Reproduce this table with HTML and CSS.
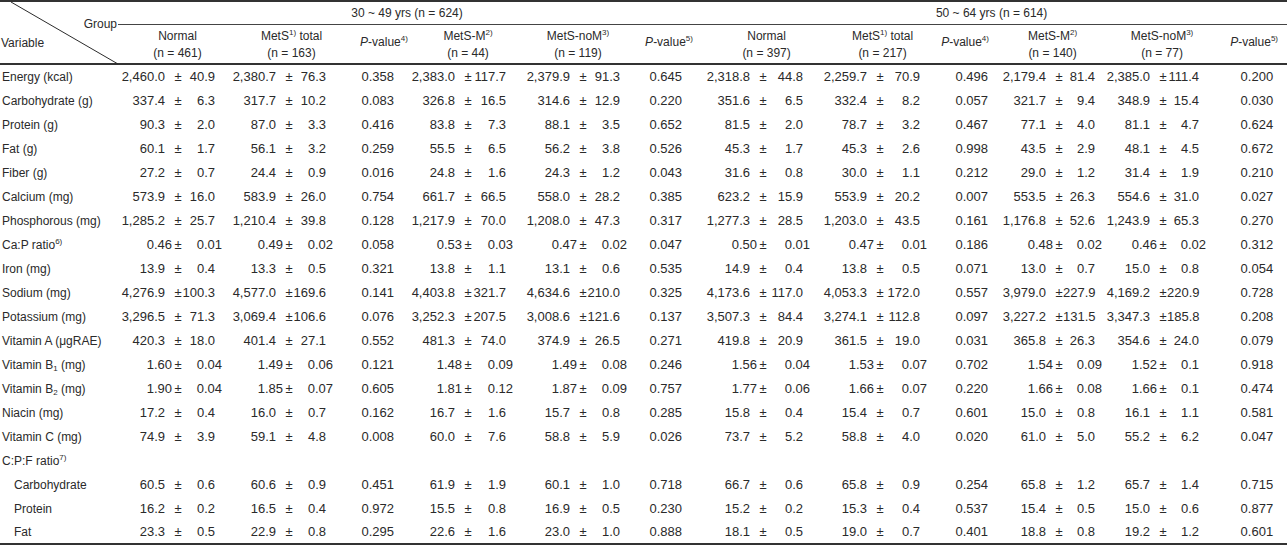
FILE: index.html
```html
<!DOCTYPE html>
<html lang="en">
<head>
<meta charset="utf-8">
<title>Nutrient intake by metabolic syndrome group</title>
<link rel="stylesheet" href="styles.css">
</head>
<body>
<table class="tbl">
  <colgroup>
    <col class="w-var">
    <col class="w56"><col class="w8"><col class="w41">
    <col class="w62"><col class="w8"><col class="w41">
    <col class="w74">
    <col class="w56"><col class="w8"><col class="w42">
    <col class="w65"><col class="w8"><col class="w41">
    <col class="w68">
    <col class="w63"><col class="w8"><col class="w44">
    <col class="w65"><col class="w8"><col class="w44">
    <col class="w74">
    <col class="w53"><col class="w8"><col class="w40">
    <col class="w56"><col class="w8"><col class="w40">
    <col class="w80">
  </colgroup>
  <thead>
    <tr class="grp">
      <th class="corner" rowspan="2">
        <svg class="diag" width="118" height="62" aria-hidden="true"><line x1="11" y1="0" x2="118" y2="62" stroke="#2b2b2b" stroke-width="1"/></svg>
        <span class="lbl-group">Group</span>
        <span class="lbl-var">Variable</span>
      </th>
      <th colspan="14">30 ~ 49 yrs (n = 624)</th>
      <th colspan="14">50 ~ 64 yrs (n = 614)</th>
    </tr>
    <tr class="sub">
      <th colspan="3">Normal<br>(n = 461)</th>
      <th colspan="3" class="sh">MetS<sup>1)</sup> total<br>(n = 163)</th>
      <th class="pv sh"><i>P</i>-value<sup>4)</sup></th>
      <th colspan="3">MetS-M<sup>2)</sup><br>(n = 44)</th>
      <th colspan="3">MetS-noM<sup>3)</sup><br>(n = 119)</th>
      <th class="pv"><i>P</i>-value<sup>5)</sup></th>
      <th colspan="3" class="sh">Normal<br>(n = 397)</th>
      <th colspan="3" class="sh">MetS<sup>1)</sup> total<br>(n = 217)</th>
      <th class="pv ns"><i>P</i>-value<sup>4)</sup></th>
      <th colspan="3" class="ns">MetS-M<sup>2)</sup><br>(n = 140)</th>
      <th colspan="3">MetS-noM<sup>3)</sup><br>(n = 77)</th>
      <th class="pv"><i>P</i>-value<sup>5)</sup></th>
    </tr>
  </thead>
  <tbody>
    <tr><td class="v">Energy (kcal)</td>
      <td class="m">2,460.0</td><td class="pm">±</td><td class="s">40.9</td>
      <td class="m">2,380.7</td><td class="pm">±</td><td class="s">76.3</td>
      <td class="p">0.358</td>
      <td class="m">2,383.0</td><td class="pm">±</td><td class="s">117.7</td>
      <td class="m">2,379.9</td><td class="pm">±</td><td class="s">91.3</td>
      <td class="p">0.645</td>
      <td class="m">2,318.8</td><td class="pm">±</td><td class="s">44.8</td>
      <td class="m">2,259.7</td><td class="pm">±</td><td class="s">70.9</td>
      <td class="p">0.496</td>
      <td class="m">2,179.4</td><td class="pm">±</td><td class="s">81.4</td>
      <td class="m">2,385.0</td><td class="pm">±</td><td class="s">111.4</td>
      <td class="p">0.200</td></tr>
    <tr><td class="v">Carbohydrate (g)</td>
      <td class="m">337.4</td><td class="pm">±</td><td class="s">6.3</td>
      <td class="m">317.7</td><td class="pm">±</td><td class="s">10.2</td>
      <td class="p">0.083</td>
      <td class="m">326.8</td><td class="pm">±</td><td class="s">16.5</td>
      <td class="m">314.6</td><td class="pm">±</td><td class="s">12.9</td>
      <td class="p">0.220</td>
      <td class="m">351.6</td><td class="pm">±</td><td class="s">6.5</td>
      <td class="m">332.4</td><td class="pm">±</td><td class="s">8.2</td>
      <td class="p">0.057</td>
      <td class="m">321.7</td><td class="pm">±</td><td class="s">9.4</td>
      <td class="m">348.9</td><td class="pm">±</td><td class="s">15.4</td>
      <td class="p">0.030</td></tr>
    <tr><td class="v">Protein (g)</td>
      <td class="m">90.3</td><td class="pm">±</td><td class="s">2.0</td>
      <td class="m">87.0</td><td class="pm">±</td><td class="s">3.3</td>
      <td class="p">0.416</td>
      <td class="m">83.8</td><td class="pm">±</td><td class="s">7.3</td>
      <td class="m">88.1</td><td class="pm">±</td><td class="s">3.5</td>
      <td class="p">0.652</td>
      <td class="m">81.5</td><td class="pm">±</td><td class="s">2.0</td>
      <td class="m">78.7</td><td class="pm">±</td><td class="s">3.2</td>
      <td class="p">0.467</td>
      <td class="m">77.1</td><td class="pm">±</td><td class="s">4.0</td>
      <td class="m">81.1</td><td class="pm">±</td><td class="s">4.7</td>
      <td class="p">0.624</td></tr>
    <tr><td class="v">Fat (g)</td>
      <td class="m">60.1</td><td class="pm">±</td><td class="s">1.7</td>
      <td class="m">56.1</td><td class="pm">±</td><td class="s">3.2</td>
      <td class="p">0.259</td>
      <td class="m">55.5</td><td class="pm">±</td><td class="s">6.5</td>
      <td class="m">56.2</td><td class="pm">±</td><td class="s">3.8</td>
      <td class="p">0.526</td>
      <td class="m">45.3</td><td class="pm">±</td><td class="s">1.7</td>
      <td class="m">45.3</td><td class="pm">±</td><td class="s">2.6</td>
      <td class="p">0.998</td>
      <td class="m">43.5</td><td class="pm">±</td><td class="s">2.9</td>
      <td class="m">48.1</td><td class="pm">±</td><td class="s">4.5</td>
      <td class="p">0.672</td></tr>
    <tr><td class="v">Fiber (g)</td>
      <td class="m">27.2</td><td class="pm">±</td><td class="s">0.7</td>
      <td class="m">24.4</td><td class="pm">±</td><td class="s">0.9</td>
      <td class="p">0.016</td>
      <td class="m">24.8</td><td class="pm">±</td><td class="s">1.6</td>
      <td class="m">24.3</td><td class="pm">±</td><td class="s">1.2</td>
      <td class="p">0.043</td>
      <td class="m">31.6</td><td class="pm">±</td><td class="s">0.8</td>
      <td class="m">30.0</td><td class="pm">±</td><td class="s">1.1</td>
      <td class="p">0.212</td>
      <td class="m">29.0</td><td class="pm">±</td><td class="s">1.2</td>
      <td class="m">31.4</td><td class="pm">±</td><td class="s">1.9</td>
      <td class="p">0.210</td></tr>
    <tr><td class="v">Calcium (mg)</td>
      <td class="m">573.9</td><td class="pm">±</td><td class="s">16.0</td>
      <td class="m">583.9</td><td class="pm">±</td><td class="s">26.0</td>
      <td class="p">0.754</td>
      <td class="m">661.7</td><td class="pm">±</td><td class="s">66.5</td>
      <td class="m">558.0</td><td class="pm">±</td><td class="s">28.2</td>
      <td class="p">0.385</td>
      <td class="m">623.2</td><td class="pm">±</td><td class="s">15.9</td>
      <td class="m">553.9</td><td class="pm">±</td><td class="s">20.2</td>
      <td class="p">0.007</td>
      <td class="m">553.5</td><td class="pm">±</td><td class="s">26.3</td>
      <td class="m">554.6</td><td class="pm">±</td><td class="s">31.0</td>
      <td class="p">0.027</td></tr>
    <tr><td class="v">Phosphorous (mg)</td>
      <td class="m">1,285.2</td><td class="pm">±</td><td class="s">25.7</td>
      <td class="m">1,210.4</td><td class="pm">±</td><td class="s">39.8</td>
      <td class="p">0.128</td>
      <td class="m">1,217.9</td><td class="pm">±</td><td class="s">70.0</td>
      <td class="m">1,208.0</td><td class="pm">±</td><td class="s">47.3</td>
      <td class="p">0.317</td>
      <td class="m">1,277.3</td><td class="pm">±</td><td class="s">28.5</td>
      <td class="m">1,203.0</td><td class="pm">±</td><td class="s">43.5</td>
      <td class="p">0.161</td>
      <td class="m">1,176.8</td><td class="pm">±</td><td class="s">52.6</td>
      <td class="m">1,243.9</td><td class="pm">±</td><td class="s">65.3</td>
      <td class="p">0.270</td></tr>
    <tr class="d2"><td class="v">Ca:P ratio<sup>6)</sup></td>
      <td class="m">0.46</td><td class="pm">±</td><td class="s">0.01</td>
      <td class="m">0.49</td><td class="pm">±</td><td class="s">0.02</td>
      <td class="p">0.058</td>
      <td class="m">0.53</td><td class="pm">±</td><td class="s">0.03</td>
      <td class="m">0.47</td><td class="pm">±</td><td class="s">0.02</td>
      <td class="p">0.047</td>
      <td class="m">0.50</td><td class="pm">±</td><td class="s">0.01</td>
      <td class="m">0.47</td><td class="pm">±</td><td class="s">0.01</td>
      <td class="p">0.186</td>
      <td class="m">0.48</td><td class="pm">±</td><td class="s">0.02</td>
      <td class="m">0.46</td><td class="pm">±</td><td class="s">0.02</td>
      <td class="p">0.312</td></tr>
    <tr><td class="v">Iron (mg)</td>
      <td class="m">13.9</td><td class="pm">±</td><td class="s">0.4</td>
      <td class="m">13.3</td><td class="pm">±</td><td class="s">0.5</td>
      <td class="p">0.321</td>
      <td class="m">13.8</td><td class="pm">±</td><td class="s">1.1</td>
      <td class="m">13.1</td><td class="pm">±</td><td class="s">0.6</td>
      <td class="p">0.535</td>
      <td class="m">14.9</td><td class="pm">±</td><td class="s">0.4</td>
      <td class="m">13.8</td><td class="pm">±</td><td class="s">0.5</td>
      <td class="p">0.071</td>
      <td class="m">13.0</td><td class="pm">±</td><td class="s">0.7</td>
      <td class="m">15.0</td><td class="pm">±</td><td class="s">0.8</td>
      <td class="p">0.054</td></tr>
    <tr><td class="v">Sodium (mg)</td>
      <td class="m">4,276.9</td><td class="pm">±</td><td class="s">100.3</td>
      <td class="m">4,577.0</td><td class="pm">±</td><td class="s">169.6</td>
      <td class="p">0.141</td>
      <td class="m">4,403.8</td><td class="pm">±</td><td class="s">321.7</td>
      <td class="m">4,634.6</td><td class="pm">±</td><td class="s">210.0</td>
      <td class="p">0.325</td>
      <td class="m">4,173.6</td><td class="pm">±</td><td class="s">117.0</td>
      <td class="m">4,053.3</td><td class="pm">±</td><td class="s">172.0</td>
      <td class="p">0.557</td>
      <td class="m">3,979.0</td><td class="pm">±</td><td class="s">227.9</td>
      <td class="m">4,169.2</td><td class="pm">±</td><td class="s">220.9</td>
      <td class="p">0.728</td></tr>
    <tr><td class="v">Potassium (mg)</td>
      <td class="m">3,296.5</td><td class="pm">±</td><td class="s">71.3</td>
      <td class="m">3,069.4</td><td class="pm">±</td><td class="s">106.6</td>
      <td class="p">0.076</td>
      <td class="m">3,252.3</td><td class="pm">±</td><td class="s">207.5</td>
      <td class="m">3,008.6</td><td class="pm">±</td><td class="s">121.6</td>
      <td class="p">0.137</td>
      <td class="m">3,507.3</td><td class="pm">±</td><td class="s">84.4</td>
      <td class="m">3,274.1</td><td class="pm">±</td><td class="s">112.8</td>
      <td class="p">0.097</td>
      <td class="m">3,227.2</td><td class="pm">±</td><td class="s">131.5</td>
      <td class="m">3,347.3</td><td class="pm">±</td><td class="s">185.8</td>
      <td class="p">0.208</td></tr>
    <tr><td class="v">Vitamin A (μgRAE)</td>
      <td class="m">420.3</td><td class="pm">±</td><td class="s">18.0</td>
      <td class="m">401.4</td><td class="pm">±</td><td class="s">27.1</td>
      <td class="p">0.552</td>
      <td class="m">481.3</td><td class="pm">±</td><td class="s">74.0</td>
      <td class="m">374.9</td><td class="pm">±</td><td class="s">26.5</td>
      <td class="p">0.271</td>
      <td class="m">419.8</td><td class="pm">±</td><td class="s">20.9</td>
      <td class="m">361.5</td><td class="pm">±</td><td class="s">19.0</td>
      <td class="p">0.031</td>
      <td class="m">365.8</td><td class="pm">±</td><td class="s">26.3</td>
      <td class="m">354.6</td><td class="pm">±</td><td class="s">24.0</td>
      <td class="p">0.079</td></tr>
    <tr class="d2"><td class="v">Vitamin B<sub>1</sub> (mg)</td>
      <td class="m">1.60</td><td class="pm">±</td><td class="s">0.04</td>
      <td class="m">1.49</td><td class="pm">±</td><td class="s">0.06</td>
      <td class="p">0.121</td>
      <td class="m">1.48</td><td class="pm">±</td><td class="s">0.09</td>
      <td class="m">1.49</td><td class="pm">±</td><td class="s">0.08</td>
      <td class="p">0.246</td>
      <td class="m">1.56</td><td class="pm">±</td><td class="s">0.04</td>
      <td class="m">1.53</td><td class="pm">±</td><td class="s">0.07</td>
      <td class="p">0.702</td>
      <td class="m">1.54</td><td class="pm">±</td><td class="s">0.09</td>
      <td class="m">1.52</td><td class="pm">±</td><td class="s one">0.1</td>
      <td class="p">0.918</td></tr>
    <tr class="d2"><td class="v">Vitamin B<sub>2</sub> (mg)</td>
      <td class="m">1.90</td><td class="pm">±</td><td class="s">0.04</td>
      <td class="m">1.85</td><td class="pm">±</td><td class="s">0.07</td>
      <td class="p">0.605</td>
      <td class="m">1.81</td><td class="pm">±</td><td class="s">0.12</td>
      <td class="m">1.87</td><td class="pm">±</td><td class="s">0.09</td>
      <td class="p">0.757</td>
      <td class="m">1.77</td><td class="pm">±</td><td class="s">0.06</td>
      <td class="m">1.66</td><td class="pm">±</td><td class="s">0.07</td>
      <td class="p">0.220</td>
      <td class="m">1.66</td><td class="pm">±</td><td class="s">0.08</td>
      <td class="m">1.66</td><td class="pm">±</td><td class="s one">0.1</td>
      <td class="p">0.474</td></tr>
    <tr><td class="v">Niacin (mg)</td>
      <td class="m">17.2</td><td class="pm">±</td><td class="s">0.4</td>
      <td class="m">16.0</td><td class="pm">±</td><td class="s">0.7</td>
      <td class="p">0.162</td>
      <td class="m">16.7</td><td class="pm">±</td><td class="s">1.6</td>
      <td class="m">15.7</td><td class="pm">±</td><td class="s">0.8</td>
      <td class="p">0.285</td>
      <td class="m">15.8</td><td class="pm">±</td><td class="s">0.4</td>
      <td class="m">15.4</td><td class="pm">±</td><td class="s">0.7</td>
      <td class="p">0.601</td>
      <td class="m">15.0</td><td class="pm">±</td><td class="s">0.8</td>
      <td class="m">16.1</td><td class="pm">±</td><td class="s">1.1</td>
      <td class="p">0.581</td></tr>
    <tr><td class="v">Vitamin C (mg)</td>
      <td class="m">74.9</td><td class="pm">±</td><td class="s">3.9</td>
      <td class="m">59.1</td><td class="pm">±</td><td class="s">4.8</td>
      <td class="p">0.008</td>
      <td class="m">60.0</td><td class="pm">±</td><td class="s">7.6</td>
      <td class="m">58.8</td><td class="pm">±</td><td class="s">5.9</td>
      <td class="p">0.026</td>
      <td class="m">73.7</td><td class="pm">±</td><td class="s">5.2</td>
      <td class="m">58.8</td><td class="pm">±</td><td class="s">4.0</td>
      <td class="p">0.020</td>
      <td class="m">61.0</td><td class="pm">±</td><td class="s">5.0</td>
      <td class="m">55.2</td><td class="pm">±</td><td class="s">6.2</td>
      <td class="p">0.047</td></tr>
    <tr><td class="v">C:P:F ratio<sup>7)</sup></td><td colspan="28"></td></tr>
    <tr><td class="v ind">Carbohydrate</td>
      <td class="m">60.5</td><td class="pm">±</td><td class="s">0.6</td>
      <td class="m">60.6</td><td class="pm">±</td><td class="s">0.9</td>
      <td class="p">0.451</td>
      <td class="m">61.9</td><td class="pm">±</td><td class="s">1.9</td>
      <td class="m">60.1</td><td class="pm">±</td><td class="s">1.0</td>
      <td class="p">0.718</td>
      <td class="m">66.7</td><td class="pm">±</td><td class="s">0.6</td>
      <td class="m">65.8</td><td class="pm">±</td><td class="s">0.9</td>
      <td class="p">0.254</td>
      <td class="m">65.8</td><td class="pm">±</td><td class="s">1.2</td>
      <td class="m">65.7</td><td class="pm">±</td><td class="s">1.4</td>
      <td class="p">0.715</td></tr>
    <tr><td class="v ind">Protein</td>
      <td class="m">16.2</td><td class="pm">±</td><td class="s">0.2</td>
      <td class="m">16.5</td><td class="pm">±</td><td class="s">0.4</td>
      <td class="p">0.972</td>
      <td class="m">15.5</td><td class="pm">±</td><td class="s">0.8</td>
      <td class="m">16.9</td><td class="pm">±</td><td class="s">0.5</td>
      <td class="p">0.230</td>
      <td class="m">15.2</td><td class="pm">±</td><td class="s">0.2</td>
      <td class="m">15.3</td><td class="pm">±</td><td class="s">0.4</td>
      <td class="p">0.537</td>
      <td class="m">15.4</td><td class="pm">±</td><td class="s">0.5</td>
      <td class="m">15.0</td><td class="pm">±</td><td class="s">0.6</td>
      <td class="p">0.877</td></tr>
    <tr class="last"><td class="v ind">Fat</td>
      <td class="m">23.3</td><td class="pm">±</td><td class="s">0.5</td>
      <td class="m">22.9</td><td class="pm">±</td><td class="s">0.8</td>
      <td class="p">0.295</td>
      <td class="m">22.6</td><td class="pm">±</td><td class="s">1.6</td>
      <td class="m">23.0</td><td class="pm">±</td><td class="s">1.0</td>
      <td class="p">0.888</td>
      <td class="m">18.1</td><td class="pm">±</td><td class="s">0.5</td>
      <td class="m">19.0</td><td class="pm">±</td><td class="s">0.7</td>
      <td class="p">0.401</td>
      <td class="m">18.8</td><td class="pm">±</td><td class="s">0.8</td>
      <td class="m">19.2</td><td class="pm">±</td><td class="s">1.2</td>
      <td class="p">0.601</td></tr>
  </tbody>
</table>
</body>
</html>
```
FILE: styles.css
```css
* { box-sizing: border-box; }
html, body { margin: 0; padding: 0; background: #ffffff; }
body {
  font-family: "Liberation Sans", Arial, sans-serif;
  font-size: 12px;
  color: #2a2a2a;
}

.tbl {
  width: 1287px;
  table-layout: fixed;
  border-collapse: separate;
  border-spacing: 0;
}
th, td {
  padding: 0;
  font-weight: normal;
  white-space: nowrap;
}

/* column widths */
.w-var { width: 118px; }
.w8 { width: 8px; }
.w40 { width: 40px; }
.w41 { width: 41px; }
.w42 { width: 42px; }
.w44 { width: 44px; }
.w53 { width: 53px; }
.w56 { width: 56px; }
.w62 { width: 62px; }
.w63 { width: 63px; }
.w65 { width: 65px; }
.w68 { width: 68px; }
.w74 { width: 74px; }
.w80 { width: 80px; }

/* group row */
.grp th {
  height: 25px;
  border-top: 2px solid #333333;
  border-bottom: 1px solid #444444;
  text-align: center;
  vertical-align: middle;
  line-height: 14px;
}
.grp th.corner {
  position: relative;
  border-bottom: 2px solid #333333;
  text-align: left;
}
.diag { position: absolute; left: 0; top: 0; overflow: visible; }
.lbl-group {
  position: absolute;
  right: 1px;
  top: 15px;
  line-height: 14px;
  background: #ffffff;
  padding-left: 1px;
}
.lbl-var {
  position: absolute;
  left: 1px;
  top: 34px;
  line-height: 14px;
}

/* sub-header row */
.sub th {
  height: 40px;
  border-bottom: 2px solid #333333;
  text-align: center;
  vertical-align: bottom;
  line-height: 17px;
  padding-left: 14px;
  padding-bottom: 1px;
}
.sub th.sh { padding-left: 26px; }
.sub th.ns { padding-left: 0; }
.sub th.pv { vertical-align: middle; padding-bottom: 4px; }

sup {
  font-size: 8px;
  line-height: 0;
  vertical-align: 5px;
}
sub {
  font-size: 8px;
  line-height: 0;
  vertical-align: -2px;
}

/* body rows */
.tbl tbody td {
  height: 24px;
  vertical-align: middle;
  line-height: 16px;
}
.tbl tbody tr.last td { border-bottom: 2px solid #333333; }

.tbl td.v { text-align: left; padding-left: 2px; }
.tbl td.v.ind { padding-left: 14px; }
.tbl td.m, .tbl td.s, .tbl td.p, .tbl td.pm { font-size: 13px; }
.tbl td.m { text-align: right; padding-right: 9px; }
.tbl td.pm { text-align: center; }
.tbl td.s { text-align: right; padding-right: 8px; }
.tbl td.p { text-align: right; padding-right: 14px; }
.tbl tr.d2 td.m { padding-right: 2px; }
.tbl tr.d2 td.s { padding-right: 1px; }
.tbl tr.d2 td.s.one { padding-right: 8px; }
```
